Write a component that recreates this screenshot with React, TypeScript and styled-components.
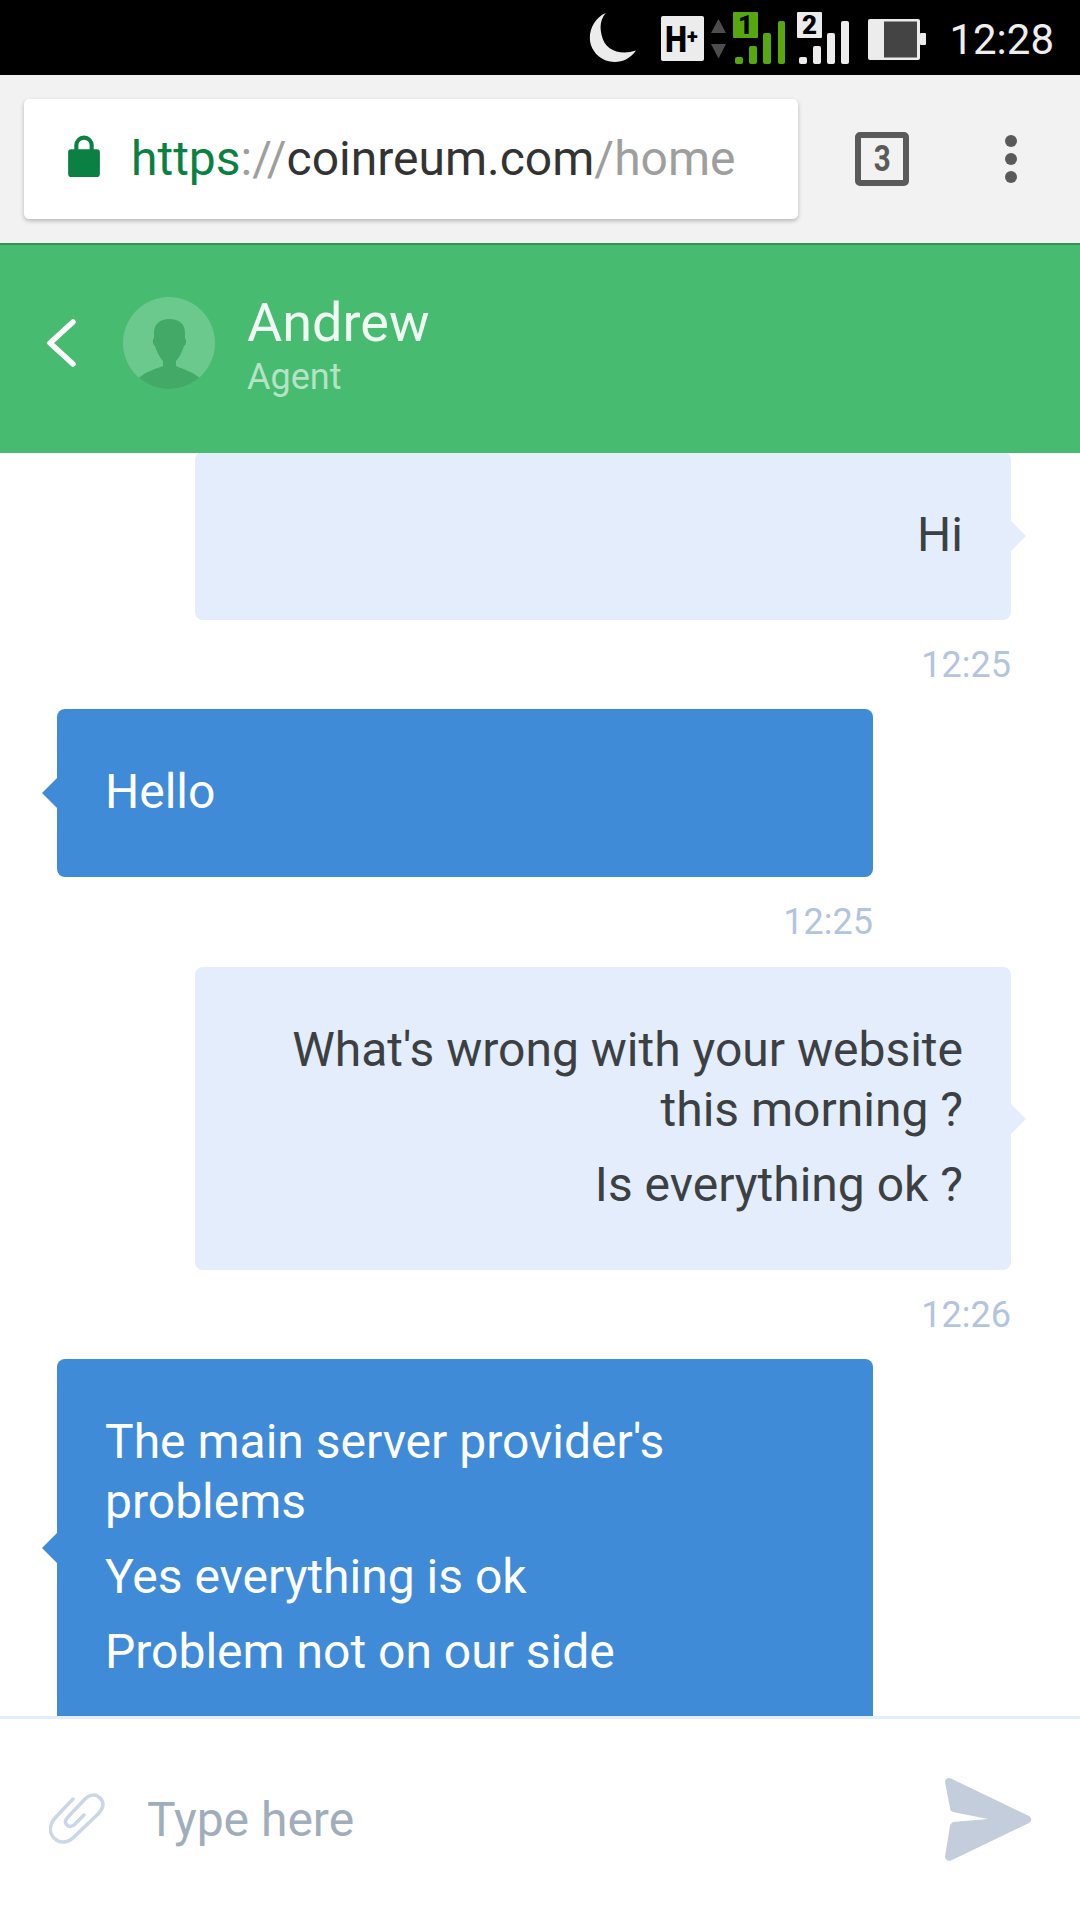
import React from "react";
import styled, { createGlobalStyle } from "styled-components";

const Global = createGlobalStyle`
  html, body { margin: 0; padding: 0; background: #fff; }
  * { box-sizing: border-box; }
  #root { width: 1080px; height: 1920px; }
`;

const Page = styled.div`
  width: 1080px;
  height: 1920px;
  display: flex;
  flex-direction: column;
  overflow: hidden;
  font-family: Roboto, "Liberation Sans", sans-serif;
  background: #fff;
`;

const StatusBar = styled.div`
  flex: none;
  height: 75px;
  background: #000;
  display: flex;
  align-items: flex-start;
  justify-content: flex-end;
  padding-right: 26px;
`;
const StatusSvg = styled.svg<{ $top?: number; $left?: number }>`
  flex: none;
  display: block;
  margin-top: ${(p) => p.$top ?? 0}px;
  margin-left: ${(p) => p.$left ?? 0}px;
`;
const Clock = styled.span`
  font-size: 42px;
  line-height: 79px;
  color: #eeeeee;
  margin-left: 23px;
`;

const Toolbar = styled.div`
  flex: none;
  height: 168px;
  background: #f2f2f2;
  display: flex;
  align-items: center;
  padding-left: 24px;
`;
const UrlBox = styled.div`
  width: 774px;
  height: 120px;
  background: #fff;
  border-radius: 5px;
  box-shadow: 0 2px 4px rgba(0, 0, 0, 0.25);
  display: flex;
  align-items: center;
  padding-left: 44px;
  gap: 31px;
`;
const Lock = styled.svg`
  display: block;
  flex: none;
  margin-top: -7px;
`;
const UrlText = styled.span`
  font-size: 48px;
  white-space: nowrap;
  color: #333;
  margin-top: -2px;
`;
const Dim = styled.span`color: #9e9e9e;`;
const Secure = styled.span`color: #0b8043;`;
const TabCount = styled.div`
  width: 54px;
  height: 54px;
  margin-left: 57px;
  border: 6px solid #5a5a5a;
  border-radius: 5px;
  display: flex;
  align-items: center;
  justify-content: center;
  font-size: 36px;
  font-weight: 700;
  color: #5a5a5a;
`;
const TabDigit = styled.span`
  display: block;
  transform: scaleX(0.82);
`;
const Dots = styled.div`
  margin-left: 96px;
  display: flex;
  flex-direction: column;
  gap: 6px;
`;
const Dot = styled.i`
  display: block;
  width: 12px;
  height: 12px;
  border-radius: 50%;
  background: #5a5a5a;
`;

const Header = styled.div`
  flex: none;
  height: 210px;
  background: #47bb70;
  border-top: 2px solid #3a8f58;
  display: flex;
  align-items: center;
  padding: 0 0 12px 47px;
`;
const Avatar = styled.svg`
  display: block;
  flex: none;
  margin-left: 47px;
`;
const Who = styled.div`
  margin: 6px 0 0 32px;
  display: flex;
  flex-direction: column;
`;
const Name = styled.div`
  font-size: 54px;
  line-height: 62px;
  color: #f0f8f3;
`;
const Role = styled.div`
  font-size: 36px;
  line-height: 46px;
  color: #b4e3c5;
`;

const Chat = styled.div`
  flex: 1;
  min-height: 0;
  overflow: hidden;
  display: flex;
  flex-direction: column;
  padding: 0 69px 0 57px;
`;
const Row = styled.div<{ $mine?: boolean }>`
  flex: none;
  display: flex;
  flex-direction: column;
  align-items: ${(p) => (p.$mine ? "flex-end" : "flex-start")};
  margin-bottom: 24px;
  &:first-child { margin-top: -1px; }
`;
const Bubble = styled.div<{ $mine?: boolean }>`
  position: relative;
  width: 816px;
  padding: 53px 48px 55px;
  border-radius: 8px;
  font-size: 48px;
  line-height: 60px;
  background: ${(p) => (p.$mine ? "#e3edfc" : "#3f8bd8")};
  color: ${(p) => (p.$mine ? "#3c4043" : "#fff")};
  text-align: ${(p) => (p.$mine ? "right" : "left")};
  &::after {
    content: "";
    position: absolute;
    top: 50%;
    ${(p) => (p.$mine ? "right: -15px;" : "left: -15px;")}
    margin-top: -15px;
    border-style: solid;
    ${(p) =>
      p.$mine
        ? "border-width: 15px 0 15px 15px; border-color: transparent transparent transparent #e3edfc;"
        : "border-width: 15px 15px 15px 0; border-color: transparent #3f8bd8 transparent transparent;"}
  }
`;
const Para = styled.p`
  margin: 0 0 15px;
  &:last-child { margin-bottom: 0; }
`;
const Time = styled.div<{ $end?: boolean }>`
  margin-top: 25px;
  font-size: 36px;
  line-height: 41px;
  color: #b3c5de;
  align-self: ${(p) => (p.$end ? "flex-end" : "auto")};
`;
const LeftTrack = styled.div`
  width: 816px;
  display: flex;
  flex-direction: column;
  align-items: flex-end;
`;

const Footer = styled.div`
  flex: none;
  height: 204px;
  background: #fff;
  border-top: 3px solid #e4edfb;
  display: flex;
  align-items: center;
  padding: 0 48px 0 49px;
`;
const Placeholder = styled.div`
  flex: 1;
  margin-left: 42px;
  font-size: 48px;
  color: #a0adbb;
`;
const IconSvg = styled.svg`
  display: block;
  flex: none;
`;

const font = "Roboto, sans-serif";

export default function App() {
  return (
    <Page>
      <Global />
      <StatusBar>
        <StatusSvg width="48" height="50" viewBox="0 0 46 48" $top={13}>
          <path d="M17 0C3 6-3 25 6 37c9 13 30 14 40-1-15 5-30 0-33-15C11 13 12 6 17 0Z" fill="#ececec" />
        </StatusSvg>
        <StatusSvg width="136" height="66" viewBox="0 0 136 66" $left={25}>
          <rect x="0" y="16" width="43" height="45" rx="2" fill="#ececec" />
          <text x="4" y="52" fontFamily={font} fontWeight="900" fontSize="36" textLength="22" lengthAdjust="spacingAndGlyphs" fill="#000">H</text>
          <text x="26" y="43" fontFamily={font} fontWeight="900" fontSize="20" fill="#000">+</text>
          <path d="M50 33 57.500 19 65 33ZM50 44l7.500 14.500L65 44Z" fill="#4d4d4d" />
          <rect x="72" y="12" width="25" height="26" rx="1" fill="#57a80f" />
          <text x="84.500" y="34" textAnchor="middle" fontFamily={font} fontWeight="900" fontSize="26" fill="#000">1</text>
          <rect x="74" y="57" width="8" height="7" rx="2" fill="#57a80f" />
          <rect x="88" y="46" width="8" height="18" rx="2" fill="#57a80f" />
          <rect x="102" y="33" width="8" height="31" rx="2" fill="#57a80f" />
          <rect x="117" y="21" width="7" height="43" rx="2" fill="#57a80f" />
        </StatusSvg>
        <StatusSvg width="52" height="66" viewBox="0 0 52 66">
          <rect x="0" y="12" width="25" height="26" rx="1" fill="#ececec" />
          <text x="12.500" y="34" textAnchor="middle" fontFamily={font} fontWeight="900" fontSize="26" fill="#000">2</text>
          <rect x="2" y="57" width="8" height="7" rx="2" fill="#ececec" />
          <rect x="16" y="46" width="8" height="18" rx="2" fill="#ececec" />
          <rect x="30" y="33" width="8" height="31" rx="2" fill="#ececec" />
          <rect x="44" y="21" width="8" height="43" rx="2" fill="#ececec" />
        </StatusSvg>
        <StatusSvg width="58" height="41" viewBox="0 0 58 41" $top={19} $left={19}>
          <rect x="0" y="0" width="52" height="41" rx="2" fill="#ececec" />
          <rect x="16" y="2.500" width="33" height="36" fill="#444" />
          <rect x="52" y="14" width="6" height="12" rx="1" fill="#ececec" />
        </StatusSvg>
        <Clock>12:28</Clock>
      </StatusBar>

      <Toolbar>
        <UrlBox>
          <Lock width="32" height="43" viewBox="0 0 31 42">
            <path
              d="M6 15v-4a9.5 9.5 0 0 1 19 0v4h3a3 3 0 0 1 3 3v21a3 3 0 0 1-3 3H3a3 3 0 0 1-3-3V18a3 3 0 0 1 3-3Zm4 0h11v-4a5.500 5.500 0 0 0-11 0Z"
              fill="#0b8043"
            />
          </Lock>
          <UrlText>
            <Secure>https</Secure>
            <Dim>://</Dim>coinreum.com<Dim>/home</Dim>
          </UrlText>
        </UrlBox>
        <TabCount>
          <TabDigit>3</TabDigit>
        </TabCount>
        <Dots>
          <Dot />
          <Dot />
          <Dot />
        </Dots>
      </Toolbar>

      <Header>
        <IconSvg width="29" height="48" viewBox="0 0 29 48">
          <path d="M26 3 3 24l23 21" fill="none" stroke="#fff" strokeWidth="5.500" strokeLinecap="round" strokeLinejoin="round" />
        </IconSvg>
        <Avatar width="92" height="92" viewBox="0 0 92 92">
          <defs>
            <clipPath id="avatar-clip">
              <circle cx="46" cy="46" r="46" />
            </clipPath>
          </defs>
          <circle cx="46" cy="46" r="46" fill="#6bc98e" />
          <g clipPath="url(#avatar-clip)" fill="#43a966">
            <path d="M46.500 22C37 22 31 27 31 36V41C29 43 30 48 32 49C34 55 37 61 40 64V69C32 72 22 75 16 81V95H77V81C70 75 60 72 53 69V64C56 61 59 55 61 49C63 48 64 43 62 41V36C62 27 56 22 46.500 22Z" />
          </g>
        </Avatar>
        <Who>
          <Name>Andrew</Name>
          <Role>Agent</Role>
        </Who>
      </Header>

      <Chat>
        <Row $mine>
          <Bubble $mine>Hi</Bubble>
          <Time>12:25</Time>
        </Row>
        <LeftTrack>
          <Row>
            <Bubble>Hello</Bubble>
            <Time $end>12:25</Time>
          </Row>
        </LeftTrack>
        <Row $mine>
          <Bubble $mine>
            <Para>What's wrong with your website this morning ?</Para>
            <Para>Is everything ok ?</Para>
          </Bubble>
          <Time>12:26</Time>
        </Row>
        <LeftTrack>
          <Row>
            <Bubble>
              <Para>The main server provider's problems</Para>
              <Para>Yes everything is ok</Para>
              <Para>Problem not on our side</Para>
            </Bubble>
          </Row>
        </LeftTrack>
      </Chat>

      <Footer>
        <IconSvg width="56" height="54" viewBox="0 0 56 54">
          <path
            d="M24 6 6 25c-6 7-6 15-1 20 6 6 14 5 20-1L50 20c5-6 5-11 1-15-4-4-10-4-15 1L19 24c-3 3-3 6-1 8 2 2 5 2 8-1l9-9"
            fill="none"
            stroke="#cad7e8"
            strokeWidth="3.500"
            strokeLinecap="round"
          />
        </IconSvg>
        <Placeholder>Type here</Placeholder>
        <IconSvg width="87" height="83" viewBox="0 0 87 83">
          <path
            d="M6 0.500 84 38c3 2 3 5 0 7L6 82.500c-3 1-6-1-6-4L5 48c0-2 2-3 3-4l35-3-35-7c-2-1-3-2-3-4L0 4c0-3 3-5 6-3.500Z"
            fill="#c3cddb"
          />
        </IconSvg>
      </Footer>
    </Page>
  );
}
